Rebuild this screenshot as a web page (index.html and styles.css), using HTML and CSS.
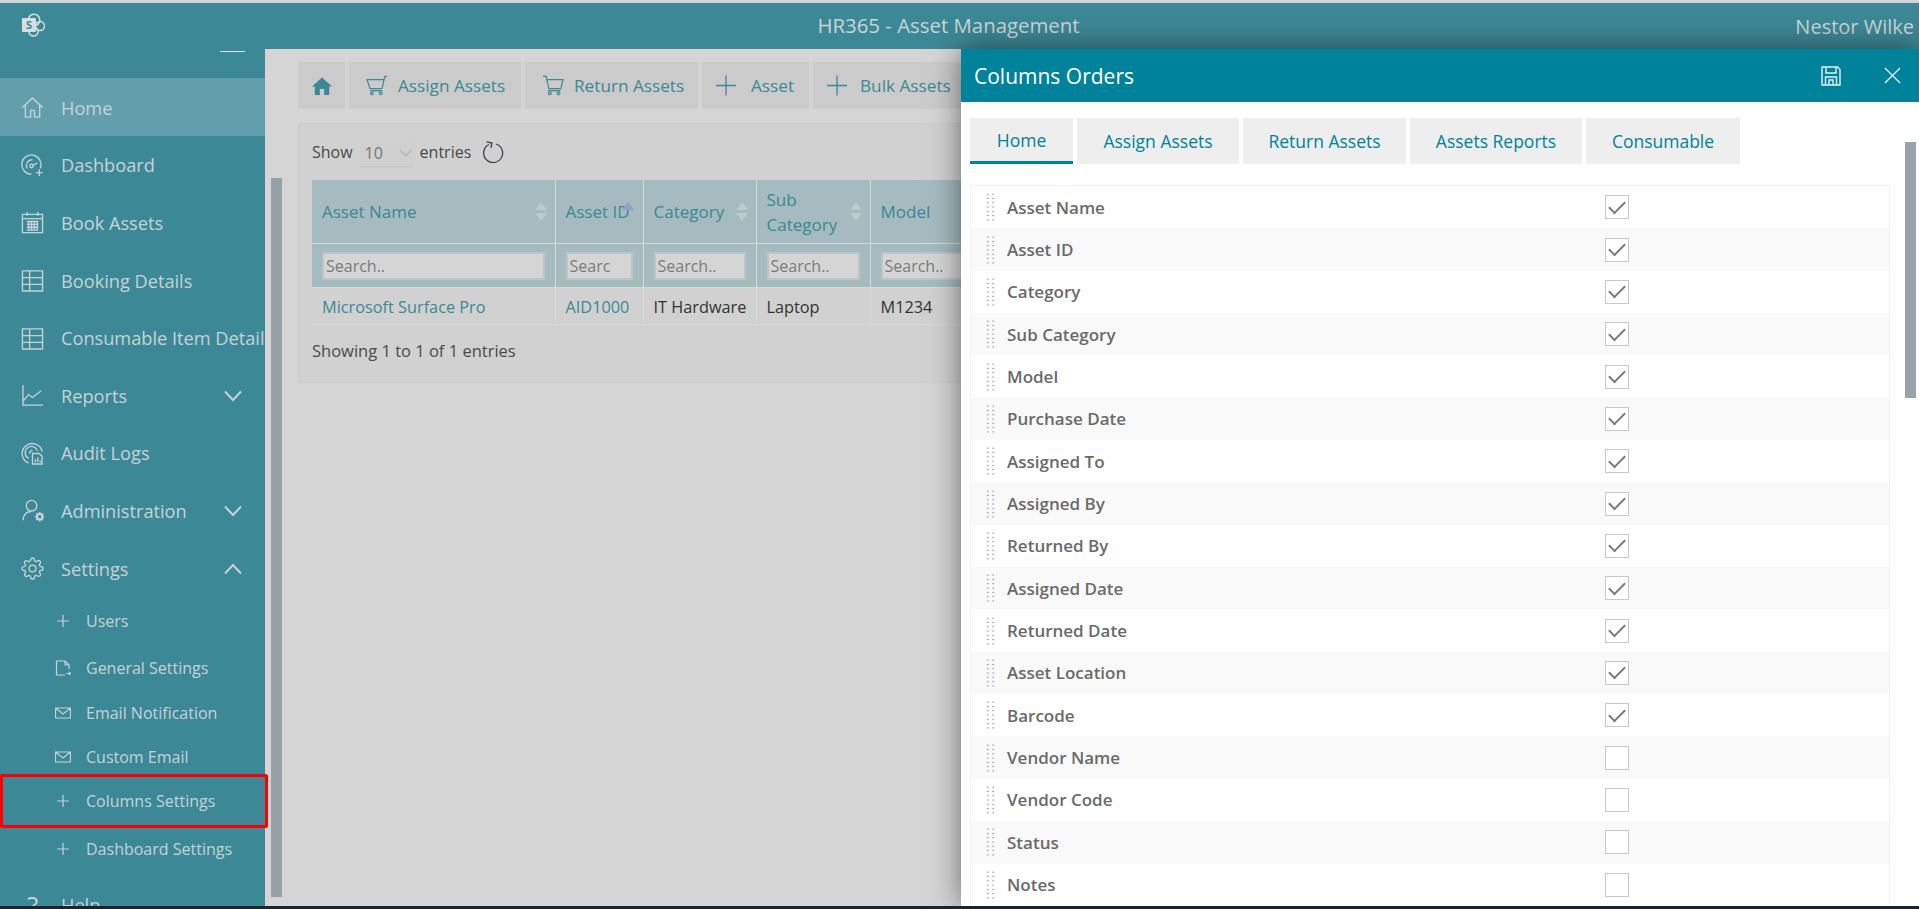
FILE: index.html

```html
<!DOCTYPE html>
<html lang="en">
<head>
    <meta charset="UTF-8">
    <title>HR365 - Asset Management</title>
    <link rel="stylesheet" href="styles.css">
</head>
<body>
    <div class="app">
        <header class="topbar">
            <svg class="logo" viewBox="0 0 24 24" fill="none" stroke="#d3dfe2" stroke-width="1.500">
                <circle cx="13" cy="7" r="5.800"/>
                <circle cx="19" cy="13" r="4.500"/>
                <circle cx="12.500" cy="18.500" r="4.500"/>
                <rect x="1" y="5" width="14" height="14" rx="1" fill="#d3dfe2" stroke="none"/>
                <text x="8" y="16" class="logo-s">S</text>
            </svg>
            <div class="topbar-title">HR365 - Asset Management</div>
            <div class="topbar-user">Nestor Wilke</div>
        </header>

        <div class="layout">
            <aside class="sidebar">
                <div class="sidebar-toggle"><span></span></div>
                <nav class="nav">
                    <a class="nav-item active">
                        <svg class="nav-icon" viewBox="0 0 24 24"><path d="M1.500 12 12 2l10.500 10M4.500 10v12h5.500v-7h4v7h5.500V10"/></svg>
                        <span class="nav-label">Home</span>
                    </a>
                    <a class="nav-item">
                        <svg class="nav-icon" viewBox="0 0 24 24"><path d="M20 15A10 10 0 1 0 11 21M12 6a6 6 0 0 0-5.500 9M17 9.500 12 12"/><circle cx="11" cy="12.500" r="1.800"/><path d="M19 16v7M15.500 19.500h7"/></svg>
                        <span class="nav-label">Dashboard</span>
                    </a>
                    <a class="nav-item">
                        <svg class="nav-icon" viewBox="0 0 24 24"><path d="M1.500 3.500h21v19h-21zM1.500 8h21M6.500 1v4M17.500 1v4M6 11h12M6 14h12M6 17h12M6 20h12M8 11v9M11 11v9M14 11v9M17 11v9"/></svg>
                        <span class="nav-label">Book Assets</span>
                    </a>
                    <a class="nav-item">
                        <svg class="nav-icon" viewBox="0 0 24 24"><path d="M1.500 2h21v21h-21zM1.500 9h21M1.500 16h21M9 2v21"/></svg>
                        <span class="nav-label">Booking Details</span>
                    </a>
                    <a class="nav-item">
                        <svg class="nav-icon" viewBox="0 0 24 24"><path d="M1.500 2h21v21h-21zM1.500 9h21M1.500 16h21M9 2v21"/></svg>
                        <span class="nav-label">Consumable Item Details</span>
                    </a>
                    <a class="nav-item">
                        <svg class="nav-icon" viewBox="0 0 24 24"><path d="M2 1v21h21M2 18l6-7 4 3 9-7"/></svg>
                        <span class="nav-label">Reports</span>
                        <svg class="nav-caret" viewBox="0 0 18 12"><path d="M1 1.500 9 10l8-8.500"/></svg>
                    </a>
                    <a class="nav-item">
                        <svg class="nav-icon" viewBox="0 0 24 24"><path d="M8 22A10.500 10.500 0 1 1 22 10M8 17a6.500 6.500 0 1 1 9-8M9 12a3 3 0 0 1 3-3"/><path d="M12 12h7l3 3v8H12zM15 21v-3M17.500 21v-5M20 21v-2"/></svg>
                        <span class="nav-label">Audit Logs</span>
                    </a>
                    <a class="nav-item">
                        <svg class="nav-icon" viewBox="0 0 24 24"><circle cx="11" cy="7" r="5.500"/><path d="M2 22c.5-5 3-8.500 8-9"/><circle cx="19.500" cy="18.500" r="2.800" stroke-width="2.200"/><path d="M19.500 13.500v2M19.500 21.500v2M14.500 18.500h2M22.500 18.500h2M16 15l1.300 1.300M21.700 20.700 23 22M23 15l-1.300 1.300M17.300 20.700 16 22" stroke-width="1.600"/></svg>
                        <span class="nav-label">Administration</span>
                        <svg class="nav-caret" viewBox="0 0 18 12"><path d="M1 1.500 9 10l8-8.500"/></svg>
                    </a>
                    <a class="nav-item">
                        <svg class="nav-icon" viewBox="0 0 24 24"><circle cx="12" cy="12" r="3.500"/><path d="M19.400 15a1.650 1.650 0 0 0 .33 1.820l.06.06a2 2 0 0 1 0 2.830 2 2 0 0 1-2.830 0l-.06-.06a1.650 1.650 0 0 0-1.820-.33 1.650 1.650 0 0 0-1 1.510V21a2 2 0 0 1-2 2 2 2 0 0 1-2-2v-.09A1.650 1.650 0 0 0 9 19.400a1.650 1.650 0 0 0-1.820.33l-.06.06a2 2 0 0 1-2.830 0 2 2 0 0 1 0-2.830l.06-.06a1.650 1.650 0 0 0 .33-1.820 1.650 1.650 0 0 0-1.510-1H3a2 2 0 0 1-2-2 2 2 0 0 1 2-2h.09A1.650 1.650 0 0 0 4.600 9a1.650 1.650 0 0 0-.33-1.820l-.06-.06a2 2 0 0 1 0-2.830 2 2 0 0 1 2.830 0l.06.06a1.650 1.650 0 0 0 1.820.33H9a1.650 1.650 0 0 0 1-1.510V3a2 2 0 0 1 2-2 2 2 0 0 1 2 2v.09a1.650 1.650 0 0 0 1 1.510 1.650 1.650 0 0 0 1.820-.33l.06-.06a2 2 0 0 1 2.830 0 2 2 0 0 1 0 2.830l-.06.06a1.650 1.650 0 0 0-.33 1.820V9a1.650 1.650 0 0 0 1.510 1H21a2 2 0 0 1 2 2 2 2 0 0 1-2 2h-.09a1.650 1.650 0 0 0-1.510 1z"/></svg>
                        <span class="nav-label">Settings</span>
                        <svg class="nav-caret" viewBox="0 0 18 12"><path d="M1 10.500 9 2l8 8.500"/></svg>
                    </a>
                    <div class="subnav">
                        <a class="sub-item sub-users">
                            <svg class="sub-icon" viewBox="0 0 16 16"><path d="M8 2v12M2 8h12"/></svg>
                            <span>Users</span>
                        </a>
                        <a class="sub-item sub-general">
                            <svg class="sub-icon" viewBox="0 0 16 16"><path d="M14 9V5l-4-4H1.500v14H10M10 1v4h4M11 13.500h4.500l-1.500-1.500M15.500 13.500 14 15"/></svg>
                            <span>General Settings</span>
                        </a>
                        <a class="sub-item sub-email">
                            <svg class="sub-icon" viewBox="0 0 16 16"><path d="M.5 3h15v10H.5zM.5 3 8 9l7.500-6"/></svg>
                            <span>Email Notification</span>
                        </a>
                        <a class="sub-item sub-custom">
                            <svg class="sub-icon" viewBox="0 0 16 16"><path d="M.5 3h15v10H.5zM.5 3 8 9l7.500-6"/></svg>
                            <span>Custom Email</span>
                        </a>
                        <a class="sub-item sub-columns marked">
                            <svg class="sub-icon" viewBox="0 0 16 16"><path d="M8 2v12M2 8h12"/></svg>
                            <span>Columns Settings</span>
                        </a>
                        <a class="sub-item sub-dashboard">
                            <svg class="sub-icon" viewBox="0 0 16 16"><path d="M8 2v12M2 8h12"/></svg>
                            <span>Dashboard Settings</span>
                        </a>
                    </div>
                    <a class="nav-item">
                        <span class="nav-glyph">?</span>
                        <span class="nav-label">Help</span>
                    </a>
                </nav>
            </aside>

            <div class="page-scroll"><div class="page-scroll-thumb"></div></div>

            <main class="content">
                <div class="toolbar">
                    <a class="tool tool-home">
                        <svg viewBox="0 0 20 18" width="20" height="18"><path d="M10 .5 0 9.500h2.800V18h5v-6h4.400v6h5V9.500H20z" fill="#3d8896"/></svg>
                    </a>
                    <a class="tool tool-assign">
                        <svg class="tool-icon" viewBox="0 0 24 22"><path d="M23 1h-2.500l-3 13.500H4.500L1 4.500h19M4.800 16.500h13"/><circle cx="6.500" cy="19.500" r="1.500"/><circle cx="16" cy="19.500" r="1.500"/></svg>
                        Assign Assets
                    </a>
                    <a class="tool tool-return">
                        <svg class="tool-icon" viewBox="0 0 24 22"><path d="M1 1h3.500l3 13.500h13L23 4.500H5M6.500 16.500H20"/><circle cx="8.500" cy="19.500" r="1.500"/><circle cx="18" cy="19.500" r="1.500"/></svg>
                        Return Assets
                    </a>
                    <a class="tool tool-asset">
                        <svg class="tool-icon" viewBox="0 0 24 22"><path d="M12 1v20M2 11h20"/></svg>
                        Asset
                    </a>
                    <a class="tool tool-bulk">
                        <svg class="tool-icon" viewBox="0 0 24 22"><path d="M12 1v20M2 11h20"/></svg>
                        Bulk Assets
                    </a>
                </div>

                <section class="card">
                    <div class="entries">
                        <span>Show</span>
                        <div class="entries-select">
                            <span>10</span>
                            <svg viewBox="0 0 14 8" width="14" height="8"><path d="M1 1l6 6 6-6" fill="none" stroke="#b5b5b5" stroke-width="1.300"/></svg>
                        </div>
                        <span>entries</span>
                        <svg class="refresh" viewBox="0 0 22 22" width="22" height="22"><path d="M7 3.500a9.500 9.500 0 1 0 7-.500" fill="none" stroke="#3a3f4a" stroke-width="1.300"/><path d="M4 1.500h5.500v5" fill="none" stroke="#3a3f4a" stroke-width="1.300" transform="rotate(12 7 4)"/></svg>
                    </div>

                    <table class="asset-table">
                        <colgroup>
                            <col class="col-name"><col class="col-id"><col class="col-cat"><col class="col-sub"><col class="col-model">
                        </colgroup>
                        <thead>
                            <tr class="head-row">
                                <th><span class="th-text">Asset Name</span><span class="sorter"></span></th>
                                <th><span class="th-text">Asset ID</span><span class="sorter sorted"></span></th>
                                <th><span class="th-text">Category</span><span class="sorter"></span></th>
                                <th><span class="th-text">Sub<br>Category</span><span class="sorter"></span></th>
                                <th><span class="th-text">Model</span><span class="sorter"></span></th>
                            </tr>
                            <tr class="filter-row">
                                <th><input placeholder="Search.."></th>
                                <th><input placeholder="Search.."></th>
                                <th><input placeholder="Search.."></th>
                                <th><input placeholder="Search.."></th>
                                <th><input placeholder="Search.."></th>
                            </tr>
                        </thead>
                        <tbody>
                            <tr>
                                <td class="link">Microsoft Surface Pro</td>
                                <td class="link">AID1000</td>
                                <td>IT Hardware</td>
                                <td>Laptop</td>
                                <td>M1234</td>
                            </tr>
                        </tbody>
                    </table>
                    <div class="table-info">Showing 1 to 1 of 1 entries</div>
                </section>
            </main>
        </div>

        <!-- drawer sits over the page -->
        <aside class="drawer">
            <div class="drawer-head">
                <h2>Columns Orders</h2>
                <svg class="drawer-save" viewBox="0 0 20 20" width="20" height="20"><path d="M1 1h15.500L19 3.500V19H1zM5 1v6h10V1M4.500 19v-8h11v8M8 19v-5h4v5"/></svg>
                <svg class="drawer-close" viewBox="0 0 18 18" width="17" height="17"><path d="M1 1l16 16M17 1 1 17"/></svg>
            </div>
            <div class="tabs">
                <a class="tab tab-home active">Home</a>
                <a class="tab tab-assign">Assign Assets</a>
                <a class="tab tab-return">Return Assets</a>
                <a class="tab tab-reports">Assets Reports</a>
                <a class="tab tab-consumable">Consumable</a>
            </div>
            <div class="column-list">
                <div class="column-row"><span class="grip"></span><span class="column-name">Asset Name</span><span class="check on"></span></div>
                <div class="column-row"><span class="grip"></span><span class="column-name">Asset ID</span><span class="check on"></span></div>
                <div class="column-row"><span class="grip"></span><span class="column-name">Category</span><span class="check on"></span></div>
                <div class="column-row"><span class="grip"></span><span class="column-name">Sub Category</span><span class="check on"></span></div>
                <div class="column-row"><span class="grip"></span><span class="column-name">Model</span><span class="check on"></span></div>
                <div class="column-row"><span class="grip"></span><span class="column-name">Purchase Date</span><span class="check on"></span></div>
                <div class="column-row"><span class="grip"></span><span class="column-name">Assigned To</span><span class="check on"></span></div>
                <div class="column-row"><span class="grip"></span><span class="column-name">Assigned By</span><span class="check on"></span></div>
                <div class="column-row"><span class="grip"></span><span class="column-name">Returned By</span><span class="check on"></span></div>
                <div class="column-row"><span class="grip"></span><span class="column-name">Assigned Date</span><span class="check on"></span></div>
                <div class="column-row"><span class="grip"></span><span class="column-name">Returned Date</span><span class="check on"></span></div>
                <div class="column-row"><span class="grip"></span><span class="column-name">Asset Location</span><span class="check on"></span></div>
                <div class="column-row"><span class="grip"></span><span class="column-name">Barcode</span><span class="check on"></span></div>
                <div class="column-row"><span class="grip"></span><span class="column-name">Vendor Name</span><span class="check"></span></div>
                <div class="column-row"><span class="grip"></span><span class="column-name">Vendor Code</span><span class="check"></span></div>
                <div class="column-row"><span class="grip"></span><span class="column-name">Status</span><span class="check"></span></div>
                <div class="column-row"><span class="grip"></span><span class="column-name">Notes</span><span class="check"></span></div>
            </div>
            <div class="drawer-scroll"></div>
        </aside>
    </div>
    <div class="taskbar"></div>
</body>
</html>
```

FILE: styles.css

```css
/* General styles */
*, *::after {
    box-sizing: border-box;
}

html, body {
    margin: 0;
    height: 100%;
    overflow: hidden;
}

body {
    font-family: "Open Sans", "Noto Sans", Arial, sans-serif;
    background-color: #d5d5d5;
    display: flex;
    flex-direction: column;
}

.app {
    position: relative;
    flex: 1;
    min-height: 0;
    display: flex;
    flex-direction: column;
    overflow: hidden;
    border-top: 3px solid #cfd6d8;
}

.taskbar {
    height: 3px;
    background-color: #1c2430;
}

/* Top bar */
.topbar {
    height: 46px;
    flex: none;
    display: grid;
    grid-template-columns: 1fr auto 1fr;
    align-items: start;
    background-color: #3d8896;
    color: #c9d5d7;
}

.logo {
    width: 24px;
    height: 24px;
    margin: 10px 0 0 21px;
}

.logo-s {
    font-family: "Open Sans", sans-serif;
    font-size: 11px;
    font-weight: 700;
    fill: #3d8896;
    stroke: none;
    text-anchor: middle;
}

.topbar-title {
    font-size: 20.400px;
    line-height: 26px;
    margin: 9px 22px 0 0;
}

.topbar-user {
    font-size: 20px;
    line-height: 26px;
    margin-top: 11px;
    padding-right: 5px;
    text-align: right;
}

.layout {
    flex: 1;
    min-height: 0;
    display: flex;
}

/* Sidebar */
.sidebar {
    width: 265px;
    flex: none;
    background-color: #3d8896;
    color: #c5d3d6;
}

.sidebar-toggle {
    height: 29px;
    padding: 2px 20px 0 0;
    display: flex;
    justify-content: flex-end;
    align-items: flex-start;
}

.sidebar-toggle span {
    width: 25px;
    height: 1px;
    background-color: #d8e2e4;
}

.nav-item {
    height: 57.6px;
    display: flex;
    align-items: center;
    padding: 2px 0 0 21px;
    font-size: 18.200px;
}

.nav-item.active {
    background-color: #639eac;
}

.nav-icon {
    width: 23px;
    height: 23px;
    flex: none;
    fill: none;
    stroke: #c5d3d6;
    stroke-width: 1.4;
}

.nav-glyph {
    width: 23px;
    flex: none;
    font-size: 26px;
    text-align: center;
}

.nav-label {
    margin-left: 17px;
    width: 204px;
    flex: none;
    overflow: hidden;
    white-space: nowrap;
}

.nav-caret {
    width: 18px;
    height: 12px;
    flex: none;
    margin-left: -41px;
    fill: none;
    stroke: #c5d3d6;
    stroke-width: 2;
}

.subnav {
    display: flex;
    flex-direction: column;
    padding-top: 1px;
}

.sub-item {
    display: flex;
    align-items: center;
    gap: 15px;
    padding-left: 55px;
    font-size: 16px;
    height: 44px;
}

.sub-users { height: 47px; }
.sub-general { height: 47px; }
.sub-email { height: 43px; }
.sub-custom { height: 45px; }
.sub-columns { height: 43px; }
.sub-dashboard { height: 53px; }

.sub-icon {
    width: 16px;
    height: 16px;
    flex: none;
    fill: none;
    stroke: #c5d3d6;
    stroke-width: 1.2;
}

/* red mark from the screenshot's annotation */
.marked {
    position: relative;
}

.marked::after {
    content: "";
    position: absolute;
    left: 0;
    width: 268px;
    top: -5px;
    height: 54px;
    border: 3px solid #f00;
    border-radius: 2px;
}

.page-scroll {
    width: 33px;
    flex: none;
    padding: 129px 16px 9px 6px;
}

.page-scroll-thumb {
    height: 100%;
    background-color: #98a0a7;
}

/* Main content */
.content {
    flex: 1;
    min-width: 0;
    background-color: #d5d5d5;
    padding-top: 13px;
    color: #4a4a4a;
}

.toolbar {
    display: flex;
    gap: 4px;
    height: 47px;
}

.tool {
    display: flex;
    align-items: center;
    gap: 10px;
    background-color: #cbcbcb;
    color: #3d8896;
    font-size: 17.200px;
    white-space: nowrap;
    padding-left: 17px;
}

.tool-home { width: 47px; padding-left: 14px; }
.tool-assign { width: 172px; }
.tool-return { width: 173px; }
.tool-asset { width: 107px; padding-left: 12px; gap: 13px; }
.tool-bulk { width: 160px; padding-left: 12px; gap: 11px; }

.tool-icon {
    width: 22px;
    height: 21px;
    flex: none;
    fill: none;
    stroke: #3d8896;
    stroke-width: 1.3;
}

.tool-asset .tool-icon,
.tool-bulk .tool-icon {
    width: 24px;
    height: 23px;
}

.card {
    margin-top: 14px;
    height: 260px;
    background-color: #d1d1d1;
    border: 1px solid #cbcbcb;
    padding: 0 0 0 13px;
    width: 1200px;
}

.entries {
    height: 56px;
    display: flex;
    align-items: center;
    gap: 7px;
    font-size: 16px;
}

.entries-select {
    width: 53px;
    height: 30px;
    display: flex;
    align-items: center;
    gap: 16px;
    padding: 2px 0 0 5px;
    background-color: #d0d0d0;
    border-bottom: 1px solid #c6c6c6;
    color: #777;
}

.refresh {
    margin-left: 4px;
}

/* Table */
.asset-table {
    width: 1000px;
    table-layout: fixed;
    border-collapse: collapse;
    font-size: 16.300px;
}

.col-name { width: 243px; }
.col-id { width: 88px; }
.col-cat { width: 113px; }
.col-sub { width: 114px; }
.col-model { width: 442px; }

.asset-table th {
    position: relative;
    background-color: #a5bbbf;
    border: 1px solid #d5dcdd;
    border-top: 0;
    padding: 0 10px;
    text-align: left;
    font-weight: 400;
    color: #3d8896;
}

.asset-table th:first-child,
.asset-table td:first-child {
    border-left: 0;
}

.head-row {
    height: 63px;
}

.th-text {
    display: block;
    font-size: 17px;
    line-height: 25px;
    padding-top: 1px;
    white-space: nowrap;
}

/* sort arrows */
.sorter {
    position: absolute;
    right: 8px;
    top: 22px;
    width: 0;
    height: 0;
    border-left: 6px solid transparent;
    border-right: 6px solid transparent;
    border-bottom: 8px solid #bbcbce;
}

.sorter::after {
    content: "";
    position: absolute;
    left: -6px;
    top: 11px;
    width: 12px;
    height: 8px;
    border-left: 6px solid transparent;
    border-right: 6px solid transparent;
    border-top: 8px solid #bbcbce;
}

.sorter.sorted {
    right: 9px;
    border-bottom-color: #8fa3c7;
}

.sorter.sorted::after {
    display: none;
}

.filter-row {
    height: 44px;
}

.filter-row input {
    display: block;
    width: 100%;
    height: 28px;
    margin-top: 1px;
    padding: 0 20px 0 2px;
    border: 2px solid #bcc6c8;
    background-color: #d5d5d5;
    font: inherit;
    font-size: 16px;
}

.filter-row input::placeholder {
    color: #7b7b7b;
    opacity: 1;
}

.asset-table td {
    height: 37px;
    padding: 2px 10px 0;
    border: 1px solid #d9d9d9;
    border-top: 0;
    white-space: nowrap;
    color: #333;
}

.asset-table td.link {
    color: #3d8896;
}

.table-info {
    margin-top: 14px;
    font-size: 16.500px;
    line-height: 24px;
}

/* Drawer */
.drawer {
    position: absolute;
    top: 46px;
    right: 0;
    bottom: 0;
    width: 958px;
    background-color: #fff;
    box-shadow: 0 0 28px rgba(0, 0, 0, 0.5);
}

.drawer-head {
    height: 53px;
    display: flex;
    align-items: center;
    padding: 0 18px 0 13px;
    background-color: #00829b;
    color: #fff;
}

.drawer-head h2 {
    flex: 1;
    margin: 0;
    font-size: 21px;
    font-weight: 400;
}

.drawer-head svg {
    fill: none;
    stroke: #e6f3f6;
    stroke-width: 1.4;
}

.drawer-save {
    margin-right: 43px;
}

.tabs {
    display: flex;
    gap: 4px;
    margin: 16px 0 0 9px;
    height: 46px;
}

.tab {
    display: flex;
    align-items: center;
    justify-content: center;
    background-color: #eee;
    color: #00829b;
    font-size: 17.500px;
}

.tab-home { width: 103px; }
.tab-assign { width: 162px; }
.tab-return { width: 163px; }
.tab-reports { width: 172px; }
.tab-consumable { width: 154px; }

.tab.active {
    border-bottom: 3px solid #00829b;
}

.column-list {
    margin: 21px 29px 0 9px;
    border: 1px solid #f3f3f3;
    border-bottom: 0;
}

.column-row {
    height: 42.35px;
    display: flex;
    align-items: center;
    padding-left: 14px;
}

.column-row:nth-child(even) {
    background-color: #f9f9f9;
}

.grip {
    width: 11px;
    height: 30px;
    flex: none;
    background-image: radial-gradient(circle, #9b9b9b 0.8px, transparent 1px);
    background-size: 5.500px 4.300px;
}

.column-name {
    flex: none;
    width: 598px;
    margin-left: 11px;
    font-size: 17px;
    font-weight: 600;
    color: #6a6a6a;
}

.check {
    width: 24px;
    height: 24px;
    flex: none;
    display: flex;
    align-items: center;
    justify-content: center;
    background-color: #fff;
    border: 1px solid #c8c8c8;
}

.check.on::after {
    content: "";
    width: 16px;
    height: 9px;
    margin-top: -4px;
    border-left: 2px solid #7a7a7a;
    border-bottom: 2px solid #7a7a7a;
    transform: rotate(-45deg);
}

.drawer-scroll {
    position: absolute;
    right: 3px;
    top: 93px;
    width: 11px;
    height: 256px;
    background-color: #9aa3ab;
}
```
